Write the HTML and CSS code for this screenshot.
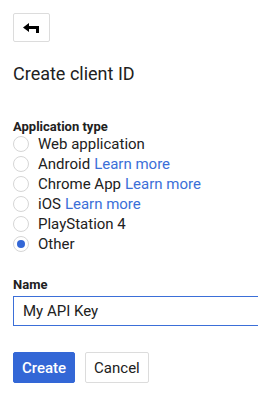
FILE: index.html
```html
<!DOCTYPE html>
<html>
<head>
    <title>Create client ID</title>
    <link rel="stylesheet" href="styles.css">
</head>
<body>
    <div class="page">
        <button class="back-btn" aria-label="Back">
            <svg width="17" height="10" viewBox="0 0 17 10">
                <path d="M0 4.5 L6 0 V3 H16 V10 H13 V6 H6 V9 Z" fill="#000"/>
            </svg>
        </button>

        <h1 class="title">Create client ID</h1>

        <div class="field">
            <div class="label">Application type</div>
            <label class="radio"><span class="circle"></span>Web application</label>
            <label class="radio"><span class="circle"></span>Android <a href="#">Learn more</a></label>
            <label class="radio"><span class="circle"></span>Chrome App <a href="#">Learn more</a></label>
            <label class="radio"><span class="circle"></span>iOS <a href="#">Learn more</a></label>
            <label class="radio"><span class="circle"></span>PlayStation 4</label>
            <label class="radio"><span class="circle checked"></span>Other</label>
        </div>

        <div class="field name-field">
            <div class="label">Name</div>
            <input type="text" class="name-input" value="My API Key">
        </div>

        <div class="button-row">
            <button class="btn primary">Create</button>
            <button class="btn">Cancel</button>
        </div>
    </div>
</body>
</html>
```

FILE: styles.css
```css
body {
    margin: 0;
    padding: 0;
    background: #ffffff;
    font-family: Roboto, Arial, sans-serif;
    color: #212121;
    overflow: hidden;
}

.page {
    padding: 13px 0 0 13px;
}

.back-btn {
    display: flex;
    align-items: center;
    justify-content: center;
    width: 37px;
    height: 29px;
    padding: 0;
    background: #ffffff;
    border: 1px solid #dcdcdc;
    border-radius: 2px;
}

.title {
    margin: 20px 0 0 0;
    font-size: 18px;
    font-weight: 400;
    line-height: 24px;
    color: #212121;
}

.field {
    margin-top: 33px;
}

.label {
    font-size: 13px;
    font-weight: 700;
    line-height: 15px;
    color: #212121;
}

.radio {
    display: flex;
    align-items: center;
    height: 20px;
    font-size: 15px;
    color: #212121;
}

.radio a {
    color: #3b6fd8;
    text-decoration: none;
    margin-left: 4px;
}

.circle {
    box-sizing: border-box;
    width: 16px;
    height: 16px;
    border: 1px solid #d6d6d6;
    border-radius: 50%;
    margin-right: 9px;
    position: relative;
}

.circle.checked::after {
    content: "";
    position: absolute;
    left: 3px;
    top: 3px;
    width: 8px;
    height: 8px;
    border-radius: 50%;
    background: #3367d6;
}

.name-field {
    margin-top: 23px;
}

.name-input {
    box-sizing: border-box;
    display: block;
    margin-top: 4px;
    width: 245px;
    height: 30px;
    padding: 0 9px;
    border: 1px solid #3b6fd8;
    border-right: none;
    border-radius: 0;
    font-family: Roboto, Arial, sans-serif;
    font-size: 15px;
    color: #212121;
    outline: none;
}

.button-row {
    display: flex;
    gap: 10px;
    margin-top: 26px;
}

.btn {
    height: 31px;
    padding: 0 8px;
    font-family: Roboto, Arial, sans-serif;
    font-size: 15px;
    color: #212121;
    background: #ffffff;
    border: 1px solid #dcdcdc;
    border-radius: 2px;
}

.btn.primary {
    background: #3367d6;
    border-color: #3367d6;
    color: #ffffff;
    font-weight: 500;
}
```
